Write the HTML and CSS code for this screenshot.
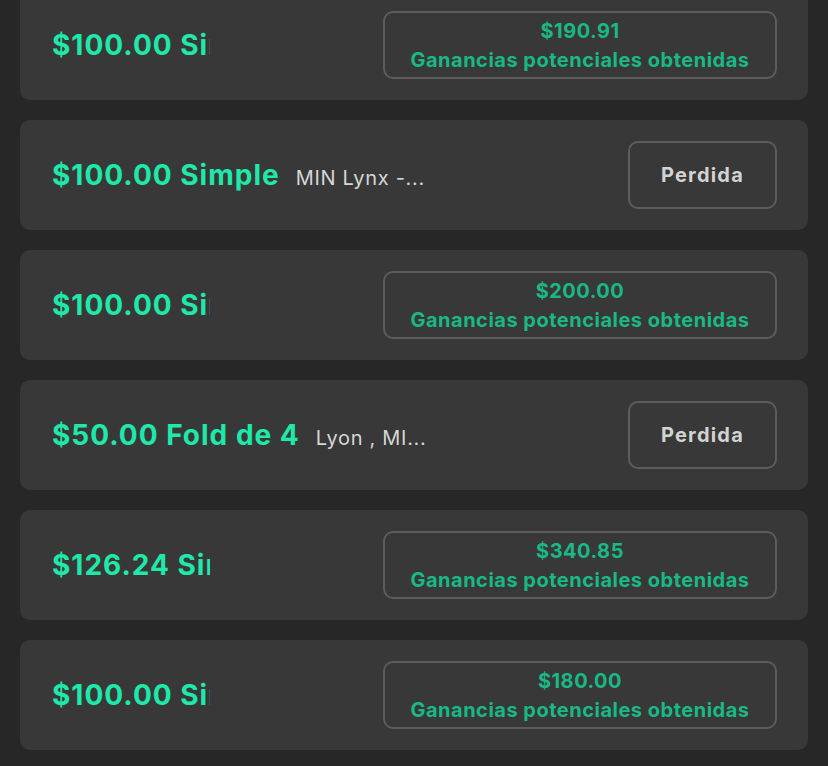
FILE: index.html
```html
<!DOCTYPE html>
<html lang="es">
<head>
<meta charset="utf-8">
<link rel="stylesheet" href="styles.css">
</head>
<body>
<div class="list">
  <div class="card">
    <div class="left"><span class="title clip">$100.00 Simple</span></div>
    <div class="box won"><div class="amt">$190.91</div><div class="lbl">Ganancias potenciales obtenidas</div></div>
  </div>
  <div class="card">
    <div class="left"><span class="title">$100.00 Simple</span><span class="sub">MIN Lynx -...</span></div>
    <div class="box lost">Perdida</div>
  </div>
  <div class="card">
    <div class="left"><span class="title clip">$100.00 Simple</span></div>
    <div class="box won"><div class="amt">$200.00</div><div class="lbl">Ganancias potenciales obtenidas</div></div>
  </div>
  <div class="card">
    <div class="left"><span class="title">$50.00 Fold de 4</span><span class="sub">Lyon , MI...</span></div>
    <div class="box lost">Perdida</div>
  </div>
  <div class="card">
    <div class="left"><span class="title clip">$126.24 Simple</span></div>
    <div class="box won"><div class="amt">$340.85</div><div class="lbl">Ganancias potenciales obtenidas</div></div>
  </div>
  <div class="card">
    <div class="left"><span class="title clip">$100.00 Simple</span></div>
    <div class="box won"><div class="amt">$180.00</div><div class="lbl">Ganancias potenciales obtenidas</div></div>
  </div>
</div>
</body>
</html>
```
FILE: styles.css
```css
html, body {
  margin: 0;
  padding: 0;
  background: #272727;
  font-family: Inter, "Noto Sans", sans-serif;
  overflow: hidden;
}
.list {
  display: flex;
  flex-direction: column;
  gap: 20px;
  margin-top: -10px;
  padding: 0 20px;
}
.card {
  height: 110px;
  box-sizing: border-box;
  background: #383838;
  border-radius: 10px;
  display: flex;
  align-items: center;
  justify-content: space-between;
  padding: 0 31px 0 32px;
}
.left {
  display: flex;
  align-items: baseline;
  gap: 16px;
  white-space: nowrap;
}
.title {
  color: #1ee8aa;
  font-weight: 700;
  font-size: 28px;
  line-height: 34px;
  letter-spacing: 1px;
}
.title.clip {
  display: inline-block;
  width: 158px;
  overflow: hidden;
  white-space: nowrap;
}
.sub {
  color: #d6d6d6;
  font-size: 20px;
  letter-spacing: 0.7px;
}
.box {
  box-sizing: border-box;
  border: 2px solid #5c5c5c;
  border-radius: 10px;
  height: 68px;
  display: flex;
  flex-direction: column;
  align-items: center;
  justify-content: center;
}
.box.won {
  width: 394px;
  color: #18b887;
  font-weight: 700;
  gap: 5px;
  letter-spacing: 0.5px;
}
.amt {
  font-size: 20px;
  line-height: 24px;
}
.lbl {
  font-size: 20px;
  line-height: 24px;
}
.box.lost {
  width: 149px;
  color: #d3d3d3;
  font-weight: 700;
  font-size: 20px;
  letter-spacing: 1.2px;
}
```
